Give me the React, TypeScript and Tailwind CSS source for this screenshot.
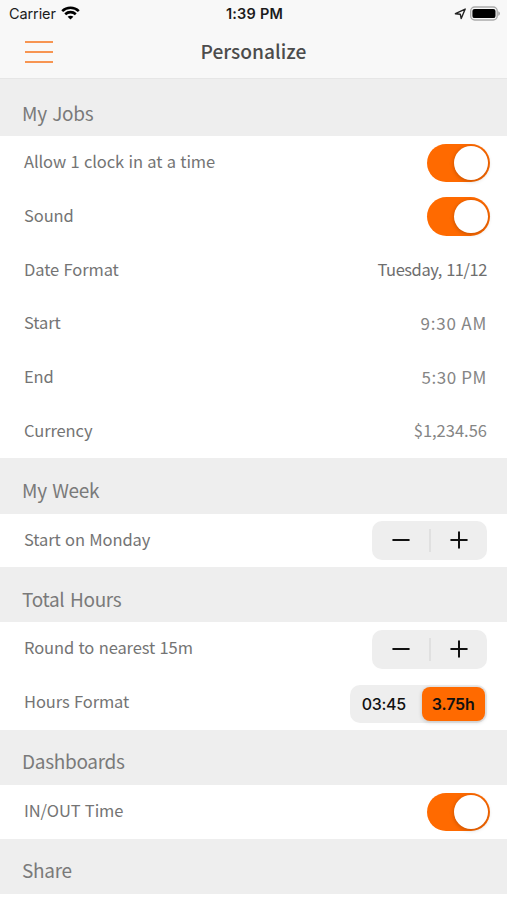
import type { ReactNode } from 'react';

function StatusBar() {
  return (
    <div className="grid h-7 grid-cols-3 items-center pl-[9px] pr-[7px] font-['Inter'] text-[14.5px] text-[#1c1c1c]">
      <div className="flex items-center gap-[5px]">
        <span className="tracking-[-0.1px]">Carrier</span>
        <svg className="-mt-[2px]" width="19" height="14" viewBox="0 0 19 14" fill="none" stroke="#000" strokeWidth="2.6">
          <path d="M1.2 5.1C5.8 .7 13.2 .7 17.8 5.1" />
          <path d="M4.2 8.2C7.2 5.4 11.8 5.4 14.8 8.2" />
          <path d="M9.5 13.6L6.6 10.8C8.2 9.4 10.8 9.4 12.4 10.8Z" fill="#000" stroke="none" />
        </svg>
      </div>
      <div className="whitespace-nowrap text-center font-semibold tracking-[0.2px]">1:39 PM</div>
      <div className="flex items-center justify-end gap-[4px]">
        <svg width="12" height="12" viewBox="0 0 12 12" fill="none" stroke="#222" strokeWidth="1.4" strokeLinejoin="round">
          <path d="M1.4 5.7L11.2 1.1L7.2 10.6L6.3 6.2Z" />
        </svg>
        <svg className="-mt-[2px]" width="30" height="15" viewBox="0 0 30 15">
          <rect x="0.7" y="1" width="26.5" height="13" rx="4" fill="#f8f8f8" stroke="#aaa" strokeWidth="1.4" />
          <rect x="2.4" y="2.9" width="23.1" height="9.2" rx="2.2" fill="#000" />
          <path d="M28.2 5.2C30.6 6 30.6 9 28.2 9.8Z" fill="#aaa" />
        </svg>
      </div>
    </div>
  );
}

function Section({ title, children }: { title: string; children?: ReactNode }) {
  return (
    <section>
      <h2 className="flex h-[55.2px] items-center bg-[#eee] pl-[22px] pt-[7px] text-[19px] leading-none tracking-[-0.3px] text-[#7a7a7a] [word-spacing:1.5px]">
        {title}
      </h2>
      {children}
    </section>
  );
}

function Row({ label, children }: { label: string; children: ReactNode }) {
  return (
    <div className="flex h-[53.7px] items-center justify-between bg-white pl-6 pr-[20px] text-[16.5px] leading-none text-[#747474]">
      <span className="pb-[3px] tracking-[-0.1px] [word-spacing:0.8px]">{label}</span>
      {children}
    </div>
  );
}

function Value({ className = '', children }: { className?: string; children: ReactNode }) {
  return <span className={`pb-[3px] ${className}`}>{children}</span>;
}

function Toggle() {
  return (
    <div className="-mr-[3px] flex h-[38.5px] w-[63px] items-center justify-end rounded-full bg-[#ff6a00] pr-[2.5px]">
      <div className="size-[33.5px] rounded-full bg-white shadow-[0_1px_4px_rgba(0,0,0,0.25)]" />
    </div>
  );
}

function Stepper() {
  return (
    <div className="flex h-[39px] w-[115px] items-center rounded-[10px] bg-[#eee]">
      <div className="flex w-[57px] justify-center pl-px">
        <svg width="18" height="18" viewBox="0 0 18 18" stroke="#111" strokeWidth="2" strokeLinecap="round">
          <path d="M1.2 9H16.8" />
        </svg>
      </div>
      <div className="h-[23px] w-[2px] bg-[#e0e0e0]" />
      <div className="flex flex-1 justify-center">
        <svg width="18" height="18" viewBox="0 0 18 18" stroke="#111" strokeWidth="2" strokeLinecap="round">
          <path d="M1.2 9H16.8M9 1.2V16.8" />
        </svg>
      </div>
    </div>
  );
}

function HoursFormat() {
  return (
    <div className="mt-[3px] flex h-[38px] w-[137px] items-center rounded-[10px] bg-[#eee] p-[2px] font-['Inter'] text-[16px] text-[#111]">
      <div className="flex-1 pr-[6px] text-center font-medium tracking-[-0.3px]">03:45</div>
      <div className="flex h-[34px] w-[63.5px] items-center justify-center rounded-[8px] bg-[#ff6a00] font-semibold tracking-[-0.1px] shadow-[0_1px_4px_rgba(0,0,0,0.2)]">
        3.75h
      </div>
    </div>
  );
}

export default function App() {
  return (
    <div className="h-[900px] w-[507px] overflow-hidden bg-white font-['Noto_Sans_CJK_SC','Noto_Sans',sans-serif]">
      <header className="h-[79px] border-b border-[#e6e6e6] bg-[#f8f8f8]">
        <StatusBar />
        <div className="grid h-[48px] grid-cols-[1fr_auto_1fr] items-center px-[25px]">
          <div className="flex w-[28px] flex-col gap-[8.3px]">
            <div className="h-[2px] bg-[#f79552]" />
            <div className="h-[2px] bg-[#f79552]" />
            <div className="h-[2px] bg-[#f79552]" />
          </div>
          <h1 className="text-[19.2px] font-medium leading-none text-[#4c4c4c]">Personalize</h1>
        </div>
      </header>
      <div className="h-[2px] bg-[#eee]" />

      <Section title="My Jobs">
        <Row label="Allow 1 clock in at a time"><Toggle /></Row>
        <Row label="Sound"><Toggle /></Row>
        <Row label="Date Format">
          <Value className="tracking-[-0.45px] text-[#6e6e6e] [word-spacing:1px]">Tuesday, 11/12</Value>
        </Row>
        <Row label="Start">
          <Value className="text-[17px] tracking-[0.8px] text-[#858585]">9:30 AM</Value>
        </Row>
        <Row label="End">
          <Value className="text-[17px] tracking-[0.6px] text-[#858585]">5:30 PM</Value>
        </Row>
        <Row label="Currency">
          <Value className="text-[#858585]">$1,234.56</Value>
        </Row>
      </Section>
      <Section title="My Week">
        <Row label="Start on Monday"><Stepper /></Row>
      </Section>
      <Section title="Total Hours">
        <Row label="Round to nearest 15m"><Stepper /></Row>
        <Row label="Hours Format"><HoursFormat /></Row>
      </Section>
      <Section title="Dashboards">
        <Row label="IN/OUT Time"><Toggle /></Row>
      </Section>
      <Section title="Share" />
    </div>
  );
}
